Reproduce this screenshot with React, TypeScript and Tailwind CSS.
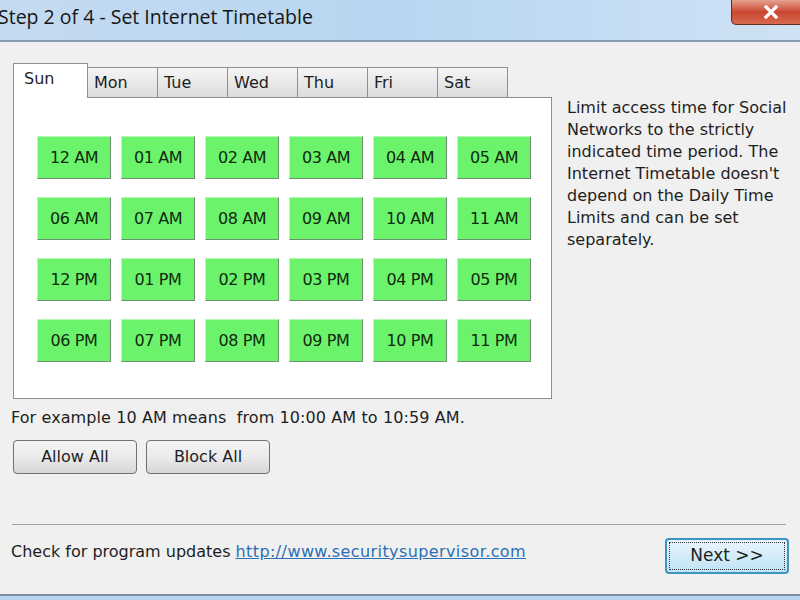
const hours = [
  "12 AM", "01 AM", "02 AM", "03 AM", "04 AM", "05 AM",
  "06 AM", "07 AM", "08 AM", "09 AM", "10 AM", "11 AM",
  "12 PM", "01 PM", "02 PM", "03 PM", "04 PM", "05 PM",
  "06 PM", "07 PM", "08 PM", "09 PM", "10 PM", "11 PM",
];

const days = ["Mon", "Tue", "Wed", "Thu", "Fri", "Sat"];

export default function App() {
  return (
    <div className="w-[800px] h-[600px] overflow-hidden flex flex-col bg-[#f0f0f0] text-[#1e1e1e] font-['DejaVu_Sans',Verdana,sans-serif]">
      {/* title bar */}
      <div className="h-[40px] shrink-0 flex items-start justify-between bg-gradient-to-r from-[#c4daf0] via-[#b8d6f2] to-[#cfe2f4]">
        <div className="ml-[-2px] mt-[4px] text-[19.5px] leading-[26px] text-[#151515] font-['Open_Sans',sans-serif]">
          Step 2 of 4 - Set Internet Timetable
        </div>
        <div className="mr-[-10px] w-[79px] h-[25px] rounded-bl-[5px] border border-t-0 border-[#6b2a22] bg-gradient-to-b from-[#e4a190] via-[#c9452f] to-[#d86a50] flex items-center justify-center">
          <svg width="16" height="14" viewBox="0 0 16 14">
            <path d="M3 2 L13 12 M13 2 L3 12" stroke="#fff" strokeWidth="3.2" strokeLinecap="square" />
          </svg>
        </div>
      </div>
      <div className="h-[2px] shrink-0 bg-[#8a9cb0]" />

      {/* body */}
      <div className="flex-1 flex flex-col px-[12px]">
        <div className="flex pt-[20px]">
          <div className="w-[539px] shrink-0 ml-[1px] flex flex-col">
            {/* tabs */}
            <div className="flex items-end h-[35px]">
              <div className="relative z-10 w-[75px] h-[35px] mb-[-1px] bg-white border border-b-0 border-[#8e8f8f] pl-[10px] pt-[3px] text-[16px]">
                Sun
              </div>
              {days.map((d) => (
                <div
                  key={d}
                  className="w-[70px] h-[30px] border border-l-0 border-b-0 border-[#8e8f8f] bg-gradient-to-b from-[#f5f5f5] to-[#dcdcdc] pl-[6px] pt-[3px] text-[16px]"
                >
                  {d}
                </div>
              ))}
            </div>
            {/* panel */}
            <div className="h-[302px] bg-white border border-[#8e8f8f] pl-[23px] pt-[38px]">
              <div className="grid grid-cols-[repeat(6,74px)] gap-x-[10px] gap-y-[18px]">
                {hours.map((h) => (
                  <div
                    key={h}
                    className="h-[43px] flex items-center justify-center bg-[#6cf36c] border border-t-[#b6f7b6] border-l-[#b6f7b6] border-r-[#6f8f6f] border-b-[#6f8f6f] text-[16px] text-[#0f2a0f] tracking-[-0.4px]"
                  >
                    {h}
                  </div>
                ))}
              </div>
            </div>
            <div className="mt-[8px] ml-[-2px] text-[16px] leading-[22px] whitespace-nowrap tracking-[0.1px]">
              For example 10 AM means&nbsp; from 10:00 AM to 10:59 AM.
            </div>
            <div className="flex gap-[9px] mt-[11px]">
              <button className="w-[124px] h-[34px] rounded-[4px] border border-[#707070] bg-gradient-to-b from-[#f4f4f4] via-[#ebebeb] to-[#d6d6d6] text-[16px] text-[#1e1e1e]">
                Allow All
              </button>
              <button className="w-[124px] h-[34px] rounded-[4px] border border-[#707070] bg-gradient-to-b from-[#f4f4f4] via-[#ebebeb] to-[#d6d6d6] text-[16px] text-[#1e1e1e]">
                Block All
              </button>
            </div>
          </div>
          <div className="ml-[15px] mt-[35px] w-[228px] text-[16px] leading-[22px]">
            Limit access time for Social Networks to the strictly indicated time period. The Internet Timetable doesn't depend on the Daily Time Limits and can be set separately.
          </div>
        </div>

        {/* footer */}
        <div className="mt-[50px] h-[1px] w-[774px] bg-[#a0a0a0]" />
        <div className="flex items-start justify-between mt-[13px]">
          <div className="ml-[-1px] mt-[3px] text-[16px] leading-[22px] whitespace-nowrap">
            Check for program updates{" "}
            <a href="#" className="text-[#2a6fb5] underline tracking-[0.4px]">
              http://www.securitysupervisor.com
            </a>
          </div>
          <button className="mr-[-1px] w-[124px] h-[36px] rounded-[4px] border-2 border-[#3c94c4] bg-gradient-to-b from-[#eaf6fd] to-[#bfe3f5] text-[17px] text-[#1e1e1e] outline-1 outline-dotted outline-offset-[-5px] outline-[#333]">
            Next &gt;&gt;
          </button>
        </div>
      </div>

      <div className="h-[2px] shrink-0 bg-[#7c8ea2]" />
      <div className="h-[4px] shrink-0 bg-[#b7d3ee]" />
    </div>
  );
}
